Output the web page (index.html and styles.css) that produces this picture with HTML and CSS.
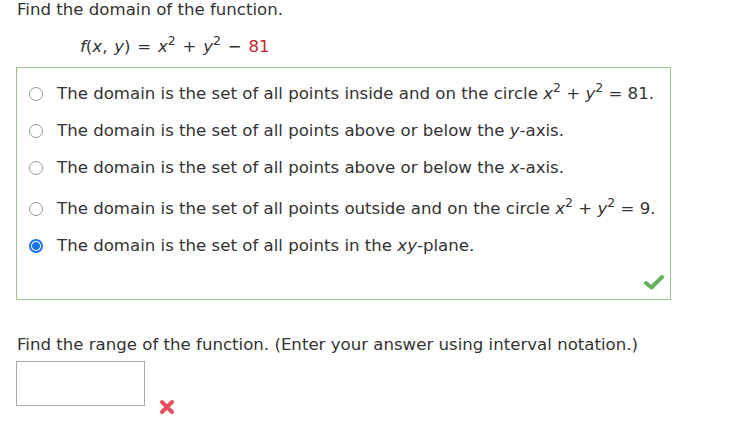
FILE: index.html
```html
<!DOCTYPE html>
<html>
<head>
<meta charset="utf-8">
<link rel="stylesheet" href="styles.css">
</head>
<body>
<div class="page">
  <div class="title">Find the domain of the function.</div>
  <div class="formula"><i>f</i>(<i>x</i>, <i>y</i>) = <i>x</i><sup>2</sup> + <i>y</i><sup>2</sup> &minus; <span class="red">81</span></div>
  <div class="box">
    <div class="opt tall"><span class="radio"></span><span class="txt">The domain is the set of all points inside and on the circle <i>x</i><sup>2</sup> + <i>y</i><sup>2</sup> = 81.</span></div>
    <div class="opt"><span class="radio"></span><span class="txt">The domain is the set of all points above or below the <i>y</i>-axis.</span></div>
    <div class="opt"><span class="radio"></span><span class="txt">The domain is the set of all points above or below the <i>x</i>-axis.</span></div>
    <div class="opt tall"><span class="radio"></span><span class="txt">The domain is the set of all points outside and on the circle <i>x</i><sup>2</sup> + <i>y</i><sup>2</sup> = 9.</span></div>
    <div class="opt"><span class="radio checked"></span><span class="txt">The domain is the set of all points in the <i>xy</i>-plane.</span></div>
    <div class="foot">
      <svg class="check" width="22" height="16" viewBox="0 0 22 16"><path d="M3 9 L8.5 13.5 L19 3" fill="none" stroke="#62b25c" stroke-width="4" stroke-linecap="round" stroke-linejoin="round"/></svg>
    </div>
  </div>
  <div class="q2">Find the range of the function. (Enter your answer using interval notation.)</div>
  <div class="answer">
    <div class="input"></div>
    <svg class="cross" width="18" height="18" viewBox="0 0 18 18"><path d="M4 4 L14 14 M14 4 L4 14" fill="none" stroke="#e4505e" stroke-width="4" stroke-linecap="round"/></svg>
  </div>
</div>
</body>
</html>
```
FILE: styles.css
```css
html, body {
  margin: 0;
  padding: 0;
  background: #fff;
}
.page {
  font-family: "DejaVu Sans", Verdana, sans-serif;
  font-size: 16.6px;
  color: #333;
  display: flex;
  flex-direction: column;
}
sup {
  font-size: 12.5px;
  line-height: 0;
  vertical-align: 7px;
}
.title {
  padding-left: 17px;
  padding-top: 1px;
  line-height: 18px;
}
.formula {
  padding-left: 80px;
  line-height: 18px;
  margin-top: 19px;
  word-spacing: 1.5px;
}
.red {
  color: #c0262d;
}
.box {
  margin-top: 11px;
  margin-left: 16px;
  width: 653px;
  height: 228px;
  border: 1px solid #9cc38b;
  padding-top: 3px;
  display: flex;
  flex-direction: column;
}
.opt {
  height: 37px;
  display: flex;
  align-items: center;
  padding-left: 12px;
}
.opt.tall {
  height: 41px;
  padding-top: 4px;
  box-sizing: border-box;
}
.radio {
  width: 14px;
  height: 14px;
  border: 1px solid #999;
  border-radius: 50%;
  box-sizing: border-box;
  flex: none;
  margin-right: 14px;
  background: #fff;
}
.radio.checked {
  border: 2px solid #1a73e8;
  background: radial-gradient(circle, #1a73e8 0 3.6px, #fff 4.3px);
}
.txt {
  line-height: 18px;
  white-space: nowrap;
}
.foot {
  flex: 1;
  display: flex;
  justify-content: flex-end;
  align-items: flex-start;
  padding-top: 10px;
  padding-right: 5px;
}
.check {
  flex: none;
}
.q2 {
  padding-left: 17px;
  line-height: 18px;
  margin-top: 36px;
}
.answer {
  display: flex;
  align-items: flex-start;
  margin-top: 7px;
}
.input {
  margin-left: 16px;
  width: 129px;
  height: 45px;
  border: 1px solid #a9a9a9;
  box-sizing: border-box;
  flex: none;
}
.cross {
  flex: none;
  margin-left: 13px;
  margin-top: 37px;
}
```
